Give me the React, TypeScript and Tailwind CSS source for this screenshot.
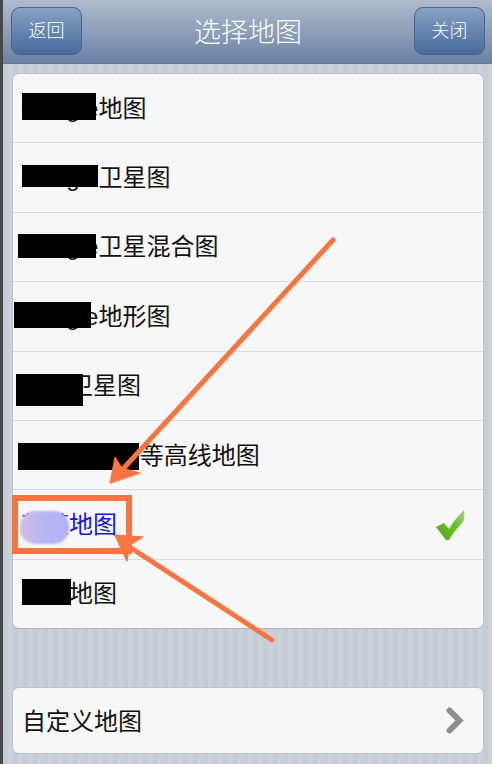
const cjk = "font-['Liberation_Sans','Noto_Sans_CJK_SC',sans-serif]";

type MapRow = {
  label: string;
  mask?: string;
  selected?: boolean;
};

const rows: MapRow[] = [
  { label: 'Google地图', mask: 'left-[9px] top-[19px] w-[74px] h-[27px]' },
  { label: 'Google卫星图', mask: 'left-[9px] top-[22px] w-[76px] h-[22px]' },
  { label: 'Google卫星混合图', mask: 'left-[5px] top-[21px] w-[78px] h-[24px]' },
  { label: 'Google地形图', mask: 'left-[1px] top-[20px] w-[77px] h-[26px]' },
  { label: '某某卫星图', mask: 'left-[3px] top-[22px] w-[67px] h-[32px]' },
  { label: 'OpenCycle等高线地图', mask: 'left-[5px] top-[22px] w-[121px] h-[27px]' },
  { label: '某某地图', selected: true },
  { label: '某某地图', mask: 'left-[9px] top-[19px] w-[49px] h-[26px]' },
];

function NavButton({ label }: { label: string }) {
  return (
    <button className="w-[71px] h-[48px] rounded-[9px] border border-[#4a6286] bg-gradient-to-b from-[#87a1c2] to-[#466a9c] text-white text-[18px] font-light">
      {label}
    </button>
  );
}

function GreenCheck() {
  return (
    <svg width="30" height="31" viewBox="0 0 30 31">
      <defs>
        <linearGradient id="tick" x1="0" y1="1" x2="1" y2="0">
          <stop offset="0" stopColor="#4aa51c" />
          <stop offset="0.6" stopColor="#6fc02e" />
          <stop offset="1" stopColor="#a9cf8a" />
        </linearGradient>
      </defs>
      <path d="M0 17 L8 13 L13 19 C17 12 22 6 28 0 C29 5 28 9 27 12 C22 17 17 23 13 30 L10 30 Z" fill="url(#tick)" />
    </svg>
  );
}

function Arrows() {
  return (
    <svg className="absolute left-0 top-0 pointer-events-none" width="492" height="764" viewBox="0 0 492 764">
      <g fill="#f9743f" stroke="#f9743f" strokeLinecap="round">
        <line x1="333" y1="240" x2="122" y2="470" strokeWidth="5" fill="none" />
        <path d="M110 483 L115 457 L122 468 L140 473 Z" strokeWidth="1" />
        <line x1="272" y1="640" x2="128" y2="546" strokeWidth="5" fill="none" />
        <path d="M115 535 L143 537 L130 545 L127 561 Z" strokeWidth="1" />
      </g>
    </svg>
  );
}

export default function App() {
  return (
    <div className={`relative w-[492px] h-[764px] overflow-hidden flex ${cjk}`}>
      <div className="w-[3px] bg-[#45474b] shrink-0" />
      <div className="flex-1 flex flex-col bg-[repeating-linear-gradient(90deg,#c4ccd6_0px,#c4ccd6_5px,#cad1da_5px,#cad1da_10px)]">
        <header className="h-[64px] shrink-0 pl-[8px] pr-[7px] pt-[7px] flex items-start justify-between bg-gradient-to-b from-[#b0bccd] to-[#6b82a4] border-b border-[#5f7593]">
          <NavButton label="返回" />
          <h1 className="mt-[13px] text-[27px] font-light text-white leading-none">选择地图</h1>
          <NavButton label="关闭" />
        </header>

        <div className="mt-[9px] ml-[9px] mr-[8px] rounded-[7px] bg-[#f7f7f7] border border-[#c0c4c9] border-b-[#b0b4b9]">
          {rows.map((row, i) => (
            <div
              key={i}
              className={`relative flex items-center justify-between pl-[8px] pr-[17px] pt-[1px] ${i < rows.length - 1 ? 'h-[69.4px] border-b border-[#d9dbde]' : 'h-[68px]'}`}
            >
              <span className={`text-[24px] leading-none ${row.selected ? 'text-[#1414dc]' : 'text-[#111]'}`}>{row.label}</span>
              {row.mask && <div className={`absolute bg-black ${row.mask}`} />}
              {row.selected && (
                <>
                  <div className="absolute left-[7px] top-[21px] w-[49px] h-[33px] rounded-[15px] blur-[1px] bg-gradient-to-r from-[#d0bce4] via-[#b7b5f2] to-[#b1b2f6]" />
                  <GreenCheck />
                </>
              )}
            </div>
          ))}
        </div>

        <div className="mt-[58px] ml-[9px] mr-[8px] h-[67px] pl-[9px] pr-[19px] pt-[3px] rounded-[7px] bg-[#f7f7f7] border border-[#c0c4c9] flex items-center justify-between">
          <span className="text-[24px] leading-none text-[#111]">自定义地图</span>
          <svg width="18" height="27" viewBox="0 0 18 27" className="-mt-[3px] text-[#8e8e8e]">
            <polyline points="3.5,3.5 13.5,13.5 3.5,23.5" fill="none" stroke="currentColor" strokeWidth="6" strokeLinecap="round" strokeLinejoin="miter" />
          </svg>
        </div>
      </div>

      <div className="absolute left-[12px] top-[495px] w-[120px] h-[59px] border-[6px] border-[#f9743f]" />
      <Arrows />
    </div>
  );
}
